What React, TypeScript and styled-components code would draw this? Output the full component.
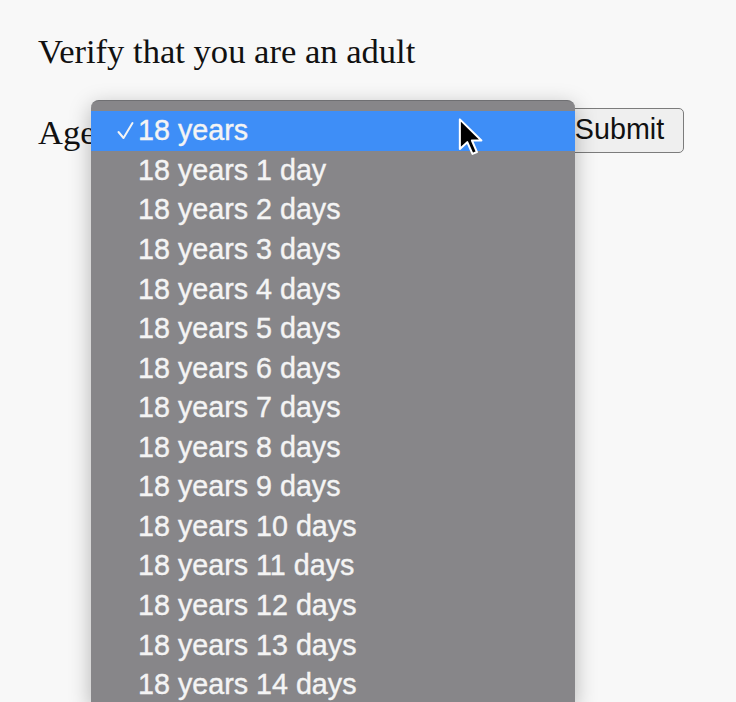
import { FC } from "react";
import styled, { createGlobalStyle } from "styled-components";

const GlobalStyle = createGlobalStyle`
  html, body {
    margin: 0;
    height: 702px;
    overflow: hidden;
    background: #f8f8f8;
  }
`;

const SPage = styled.main`
  padding: 31px 0 0 38px;
  font-family: "Liberation Serif", "Times New Roman", serif;
  color: #111;
`;

const STitle = styled.div`
  font-size: 34.6px;
  line-height: 40px;
  margin-bottom: 37px;
`;

const SRow = styled.form`
  display: flex;
  align-items: center;
  height: 45px;
`;

const SLabel = styled.label`
  width: 53px;
  font-size: 34.6px;
  line-height: 40px;
  white-space: nowrap;
  margin-top: 3px;
`;

const SSelectArea = styled.div`
  position: relative;
  width: 464px;
  height: 45px;
`;

const SMenu = styled.ul`
  position: absolute;
  top: -8px;
  left: 0;
  width: 484px;
  margin: 0;
  padding: 10px 0 0;
  list-style: none;
  box-sizing: border-box;
  background: #878689;
  border-top: 1px solid #6f6f72;
  border-radius: 8px 8px 0 0;
  box-shadow: 0 6px 22px rgba(0, 0, 0, 0.28);
  z-index: 2;
`;

const SOption = styled.li<{ $selected?: boolean }>`
  display: flex;
  align-items: center;
  height: 39.57px;
  padding-left: 26px;
  background: ${(p) => (p.$selected ? "#3e8ef7" : "transparent")};
  color: #f4f4f4;
  font-family: "Liberation Sans", Arial, sans-serif;
  font-size: 28.7px;
  -webkit-text-stroke: 0.4px #f4f4f4;
  white-space: nowrap;
`;

const SCheckSlot = styled.span`
  display: inline-flex;
  width: 21px;
  margin-right: 0;

  svg {
    width: 17px;
    height: 19px;
  }
`;

const SCursor = styled.svg`
  position: absolute;
  left: 367px;
  top: 9px;
  width: 26px;
  height: 40px;
  z-index: 3;
`;

const SSubmit = styled.button`
  height: 45px;
  width: 129px;
  padding: 0 0 2px;
  background: #efefef;
  border: 1.5px solid #7c7c7c;
  border-radius: 5px;
  color: #111;
  font-family: "Liberation Sans", Arial, sans-serif;
  font-size: 28.7px;
`;

const options = Array.from({ length: 15 }, (_, i) =>
  i === 0 ? "18 years" : `18 years ${i} ${i === 1 ? "day" : "days"}`
);

const Check: FC = () => (
  <svg viewBox="0 0 17 19">
    <path d="M1.5 11 L6.5 17 L15.5 2" fill="none" stroke="#f4f4f4" strokeWidth="2" strokeLinecap="round" strokeLinejoin="round" />
  </svg>
);

const App: FC = () => {
  return (
    <>
      <GlobalStyle />
      <SPage>
        <STitle>Verify that you are an adult</STitle>
        <SRow onSubmit={(e) => e.preventDefault()}>
          <SLabel>Age</SLabel>
          <SSelectArea>
            <SMenu role="listbox">
              {options.map((label, i) => (
                <SOption key={label} $selected={i === 0} role="option" aria-selected={i === 0}>
                  <SCheckSlot>{i === 0 && <Check />}</SCheckSlot>
                  {label}
                </SOption>
              ))}
            </SMenu>
            <SCursor viewBox="-1 -1 14 21">
              <path
                d="M0 0 L0 16 L4 12.3 L6.8 18.6 L9.2 17.6 L6.5 11.4 L11.6 11.4 Z"
                fill="#000"
                stroke="#fff"
                strokeWidth="1.1"
                strokeLinejoin="round"
              />
            </SCursor>
          </SSelectArea>
          <SSubmit type="submit">Submit</SSubmit>
        </SRow>
      </SPage>
    </>
  );
};

export default App;
